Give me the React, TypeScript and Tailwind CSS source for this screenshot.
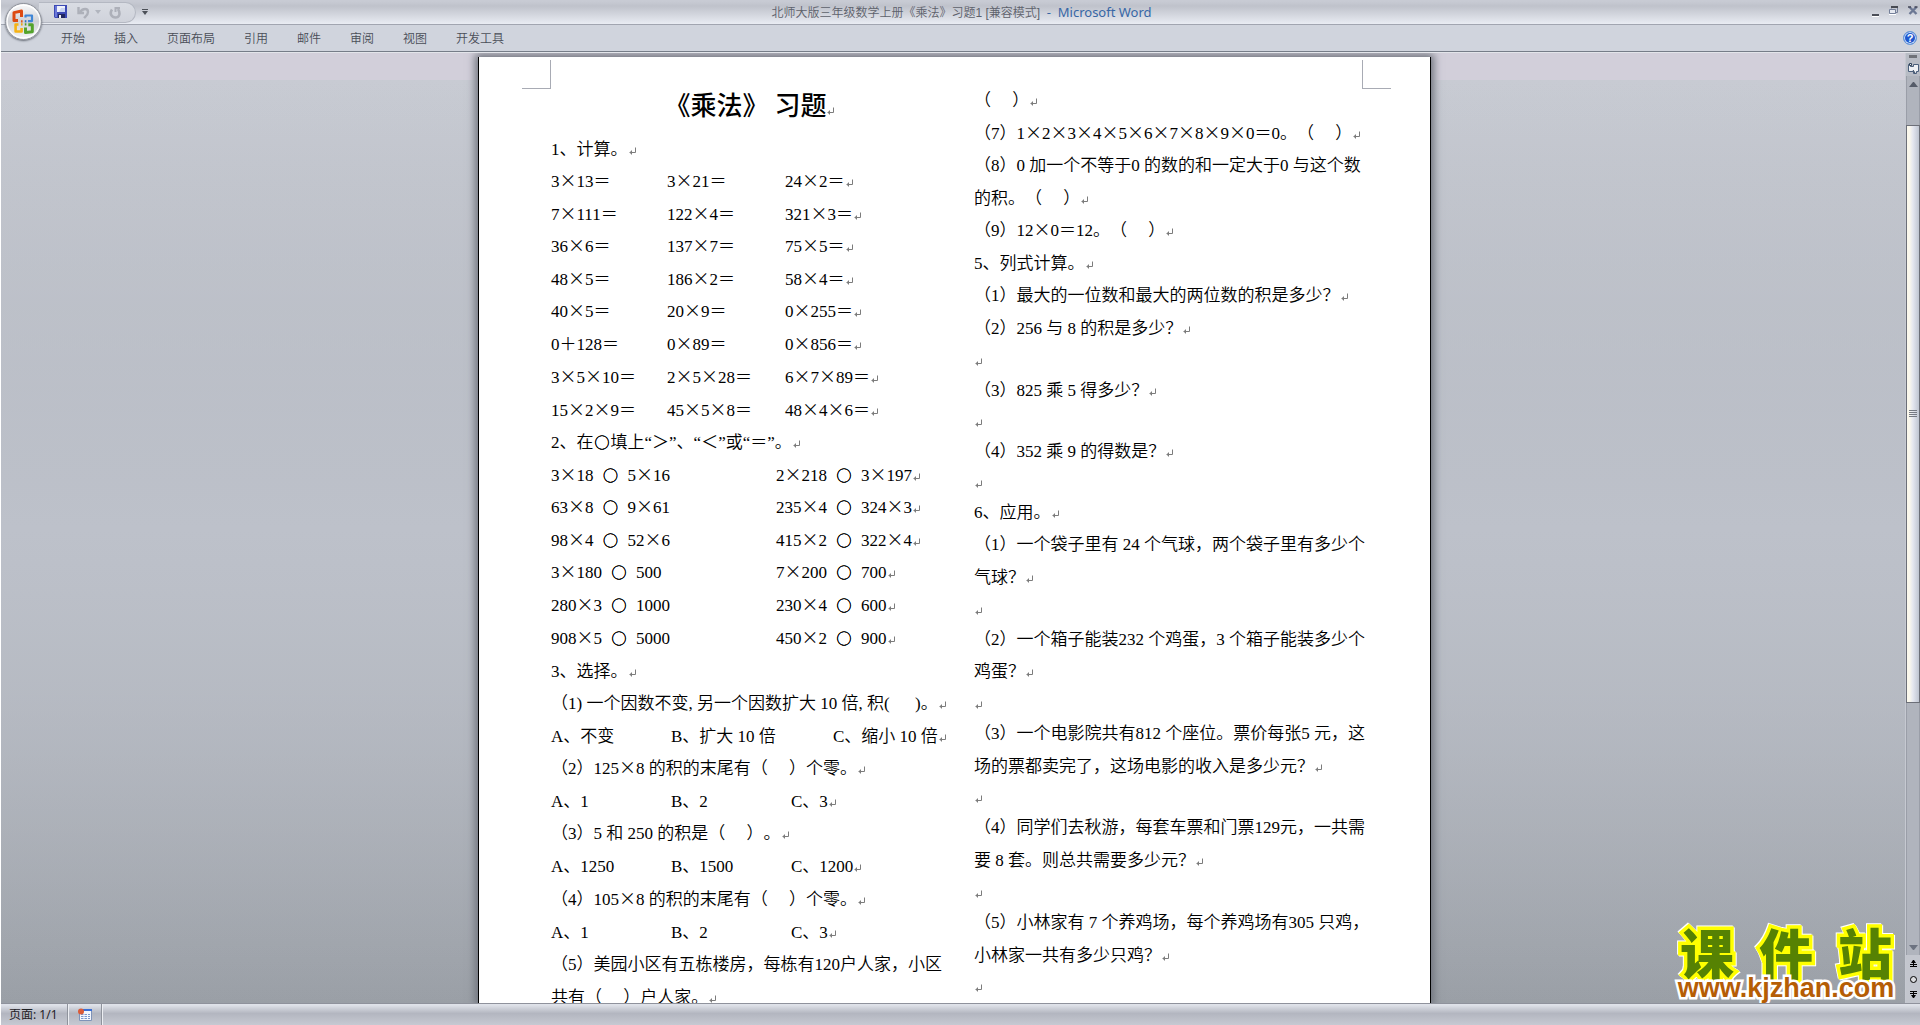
import { Fragment } from "react";
import type { ReactNode } from "react";

const TABS = ["开始", "插入", "页面布局", "引用", "邮件", "审阅", "视图", "开发工具"];

type Cells = { cols: "calc" | "compare" | "choice" | "choiceWide"; cells: string[] };
type Line = string | Cells;

const LEFT: Line[] = [
  "1、计算。",
  { cols: "calc", cells: ["3×13＝", "3×21＝", "24×2＝"] },
  { cols: "calc", cells: ["7×111＝", "122×4＝", "321×3＝"] },
  { cols: "calc", cells: ["36×6＝", "137×7＝", "75×5＝"] },
  { cols: "calc", cells: ["48×5＝", "186×2＝", "58×4＝"] },
  { cols: "calc", cells: ["40×5＝", "20×9＝", "0×255＝"] },
  { cols: "calc", cells: ["0＋128＝", "0×89＝", "0×856＝"] },
  { cols: "calc", cells: ["3×5×10＝", "2×5×28＝", "6×7×89＝"] },
  { cols: "calc", cells: ["15×2×9＝", "45×5×8＝", "48×4×6＝"] },
  "2、在○填上“＞”、“＜”或“＝”。",
  { cols: "compare", cells: ["3×18  ○  5×16", "2×218  ○  3×197"] },
  { cols: "compare", cells: ["63×8  ○  9×61", "235×4  ○  324×3"] },
  { cols: "compare", cells: ["98×4  ○  52×6", "415×2  ○  322×4"] },
  { cols: "compare", cells: ["3×180  ○  500", "7×200  ○  700"] },
  { cols: "compare", cells: ["280×3  ○  1000", "230×4  ○  600"] },
  { cols: "compare", cells: ["908×5  ○  5000", "450×2  ○  900"] },
  "3、选择。",
  "（1) 一个因数不变, 另一个因数扩大 10 倍, 积(      )。",
  { cols: "choiceWide", cells: ["A、不变", "B、扩大 10 倍", "C、缩小 10 倍"] },
  "（2）125×8 的积的末尾有（     ）个零。",
  { cols: "choice", cells: ["A、1", "B、2", "C、3"] },
  "（3）5 和 250 的积是（     ）。",
  { cols: "choice", cells: ["A、1250", "B、1500", "C、1200"] },
  "（4）105×8 的积的末尾有（     ）个零。",
  { cols: "choice", cells: ["A、1", "B、2", "C、3"] },
  "（5）美园小区有五栋楼房，每栋有120户人家，小区",
  "共有（     ）户人家。",
];

const RIGHT: string[] = [
  "（     ）",
  "（7）1×2×3×4×5×6×7×8×9×0＝0。（     ）",
  "（8）0 加一个不等于0 的数的和一定大于0 与这个数",
  "的积。（     ）",
  "（9）12×0＝12。（     ）",
  "5、列式计算。",
  "（1）最大的一位数和最大的两位数的积是多少？",
  "（2）256 与 8 的积是多少？",
  "",
  "（3）825 乘 5 得多少？",
  "",
  "（4）352 乘 9 的得数是？",
  "",
  "6、应用。",
  "（1）一个袋子里有 24 个气球，两个袋子里有多少个",
  "气球？",
  "",
  "（2）一个箱子能装232 个鸡蛋，3 个箱子能装多少个",
  "鸡蛋？",
  "",
  "（3）一个电影院共有812 个座位。票价每张5 元，这",
  "场的票都卖完了，这场电影的收入是多少元？",
  "",
  "（4）同学们去秋游，每套车票和门票129元，一共需",
  "要 8 套。则总共需要多少元？",
  "",
  "（5）小林家有 7 个养鸡场，每个养鸡场有305 只鸡，",
  "小林家一共有多少只鸡？",
  "",
];

/* Lines that wrap onto the next one carry no paragraph mark. */
const RUN_ON = /(小区|与这个数|多少个|，这|一共需|只鸡，)$/;

const GRIDS = {
  calc: "grid grid-cols-[116px_118px_1fr]",
  compare: "grid grid-cols-[225px_1fr]",
  choice: "grid grid-cols-[120px_120px_1fr]",
  choiceWide: "grid grid-cols-[120px_162px_1fr]",
};

function Mark() {
  return (
    <svg className="inline-block align-baseline" width="8" height="8" viewBox="0 0 8 8" aria-hidden="true">
      <path d="M7 0v5H1M3 3v4M2 4v2" fill="none" stroke="#7c7c7c" strokeWidth="1" transform="translate(.5 .5)" />
    </svg>
  );
}

/* Operators take the full-width shape of the Chinese face; circles sit in a full-width cell. */
function Mixed({ text }: { text: string }) {
  return (
    <>
      {text.split(/([×○])/).map((part, i) => {
        if (part === "×") {
          return (
            <span key={i} className="font-['Noto_Sans_CJK_SC',sans-serif] leading-none">
              ×
            </span>
          );
        }
        if (part === "○") {
          return (
            <span
              key={i}
              className="inline-block w-[17px] text-center font-['Noto_Sans_CJK_SC',sans-serif] text-[15px] leading-none [text-shadow:0_0_0_#000,0_0_0_#000]"
            >
              ○
            </span>
          );
        }
        return <Fragment key={i}>{part}</Fragment>;
      })}
    </>
  );
}

function DocLine({ line }: { line: Line }) {
  if (typeof line !== "string") {
    return (
      <div className={`h-8 leading-8 odd:h-[33px] nth-[8n]:h-[33px] ${GRIDS[line.cols]}`}>
        {line.cells.map((c, i) => (
          <span key={i}>
            <Mixed text={c} />
            {i === line.cells.length - 1 && <Mark />}
          </span>
        ))}
      </div>
    );
  }
  if (line === "") {
    return (
      <p className="h-[29px] leading-[30px]">
        <Mark />
      </p>
    );
  }
  return (
    <p className="h-8 leading-8 odd:h-[33px] nth-[8n]:h-[33px]">
      <Mixed text={line} />
      {!RUN_ON.test(line) && <Mark />}
    </p>
  );
}

function Crop({ side }: { side: "left" | "right" }) {
  return (
    <span
      className={
        side === "left"
          ? "absolute left-[43px] top-[3px] h-[29px] w-[29px] border-b border-r border-[#a8abb4]"
          : "absolute right-[39px] top-[3px] h-[29px] w-[29px] border-b border-l border-[#a8abb4]"
      }
    />
  );
}

function OfficeButton() {
  return (
    <button
      aria-label="Office 按钮"
      className="absolute left-[4px] top-[3px] z-10 size-[37px] rounded-full border border-[#8e929b] bg-linear-to-b from-[#fbfbfc] via-[#cfd1d6] to-[#f4f5f7] shadow-[0_1px_2px_rgba(60,65,75,.7)]"
    >
      <svg viewBox="0 0 35 35" width="35" height="35" fill="none" strokeWidth="2.6" strokeLinejoin="round">
        <circle cx="17.5" cy="17.5" r="16.4" stroke="#fff" strokeWidth="1.2" />
        <path d="M12 16.5H8V8.6L15.5 7v6" stroke="#dd4a12" strokeWidth="3" />
        <path d="M19.5 13.500V11.5h6.5v5.6h-4" stroke="#3f86d6" strokeWidth="2.2" />
        <path d="M12.5 20.500H9.6v7h6V24" stroke="#f6b315" />
        <path d="M19.5 23.500v5l6.800-.8v-7h-4" stroke="#53a32b" strokeWidth="3" />
        <path d="M15 17.3h1.6" stroke="#e2581a" strokeWidth="2.2" />
        <path d="M18.8 17.3h1.6" stroke="#2f6fc4" strokeWidth="2.2" />
        <path d="M15 20.4h1.6" stroke="#e9a80f" strokeWidth="2.2" />
        <path d="M18.8 20.4h1.6" stroke="#4b9a2a" strokeWidth="2.2" />
      </svg>
    </button>
  );
}

function QuickAccess() {
  return (
    <div className="ml-[38px] flex h-[21px] items-center rounded-r-full border border-l-0 border-[#b4b8c2] bg-linear-to-b from-[#d9dce3] to-[#d0d3db] pl-[15px] pr-[13px]">
      <button aria-label="保存">
        <svg width="14" height="14" viewBox="0 0 14 14">
          <path d="M0 0h13v13H1l-1-1z" fill="#3c49b4" />
          <path d="M1 1h2v11H1z" fill="#6b78d8" />
          <path d="M3 1h8v6H3z" fill="#eef1fb" />
          <path d="M7 3h4v4H5z" fill="#c9d4f2" />
          <path d="M4 9h7v4H4z" fill="#20265f" />
          <path d="M5 10h2v3H5z" fill="#f2f2f2" />
        </svg>
      </button>
      <button aria-label="撤消" className="ml-[9px]">
        <svg width="13" height="13" viewBox="0 0 13 13" fill="none" stroke="#adb0b9" strokeWidth="2.4">
          <path d="M3 6c3-4 8-4 8 0 0 3-2 4-4 6" />
          <path d="M1.5 1v6H7" />
        </svg>
      </button>
      <button aria-label="撤消列表" className="ml-[5px]">
        <svg width="6" height="4" viewBox="0 0 6 4">
          <path d="M0 0h6L3 4z" fill="#b1b5be" />
        </svg>
      </button>
      <button aria-label="恢复" className="ml-[8px]">
        <svg width="13" height="13" viewBox="0 0 13 13" fill="none" stroke="#adb0b9" strokeWidth="2.6">
          <path d="M3 3.5C0 8 3 11.500 6.500 11.500S12 8 9 3" />
          <path d="M6.500 6V2H11" strokeWidth="2" />
        </svg>
      </button>
    </div>
  );
}

function TitleBar() {
  return (
    <header className="relative flex h-[25px] items-center border-b border-[#a1a5b0] bg-linear-to-b from-[#c8cbd4] from-5% via-[#bfc2cb] via-25% to-[#e9ecf3]">
      <QuickAccess />
      <button aria-label="自定义快速访问工具栏" className="ml-[6px]">
        <svg width="6" height="6" viewBox="0 0 6 6" fill="#4c5058">
          <path d="M0 0h6v1H0zM0 2h6L3 6z" />
        </svg>
      </button>
      <h1 className="flex flex-1 items-baseline justify-center whitespace-pre pr-24 text-xs text-[#5d616b]">
        <span className="font-['Liberation_Sans','Noto_Sans_CJK_SC',sans-serif] font-[350]">北师大版三年级数学上册《乘法》习题1 [兼容模式]</span>
        <span className="font-['Noto_Sans'] text-[13px] leading-4 text-[#3767a6]">{"  -  Microsoft Word"}</span>
      </h1>
      <div className="flex gap-[10px] pr-[2px]">
        <button aria-label="最小化">
          <svg width="8" height="12" viewBox="0 0 8 12">
            <path d="M1 8h7v2H1z" fill="#4b4e58" />
            <path d="M1 10h7v1H1z" fill="#fff" />
          </svg>
        </button>
        <button aria-label="还原">
          <svg width="9" height="12" viewBox="0 0 9 12" fill="none" stroke="#75809a">
            <path d="M2.500 2.500V1.500h6v5H7" />
            <path d="M2 1h7" stroke="#474a52" strokeWidth="2" />
            <path d="M.5 3.500h6v4h-6z" fill="#e6e9f0" />
            <path d="M0 8.500h7" stroke="#fff" />
          </svg>
        </button>
        <button aria-label="关闭">
          <svg width="10" height="12" viewBox="0 0 10 12" fill="none" stroke="#6c7894" strokeWidth="2.400">
            <path d="M1.500 1l7 7M8.500 1l-7 7" />
            <path d="M0 1h3M6.500 1h3" stroke="#45485a" strokeWidth="1.500" />
          </svg>
        </button>
      </div>
      <OfficeButton />
    </header>
  );
}

function Scrollbar() {
  return (
    <aside className="flex w-[15px] shrink-0 flex-col border-l border-[#c6c9d1] bg-[#b0b4bd]">
      <div className="flex h-[23px] flex-col items-center bg-[#b8bcc5] pt-[2px]">
        <span className="h-[3px] w-[8px] bg-[#6f7279]" />
        <svg className="mt-[4px] shrink-0" width="13" height="13" viewBox="0 0 13 13" fill="#eef0f4" stroke="#4b5f7c">
          <path d="M1.500 2.500h2v2h3v-2h5v7h-2v2h-3v-2h-5z" />
          <path d="M2.500 1.500h2v2h-2zM6 8l2 3" stroke="#2e4159" />
        </svg>
      </div>
      <div className="flex flex-1 flex-col items-center border-x border-[#9a9ea8]">
        <svg className="mt-[6px] shrink-0" width="9" height="5" viewBox="0 0 9 5">
          <path d="M4 0h1l4 5H0z" fill="#565c69" />
        </svg>
        <div className="mt-[38px] flex w-[14px] flex-[582] flex-col items-center justify-center gap-px border border-[#6c6f78] bg-linear-to-r from-[#fbf8ec] from-20% via-[#e4e6ef] via-50% to-[#bfc5d1]">
          <span className="h-px w-2 bg-[#767a83]" />
          <span className="h-px w-2 bg-[#767a83]" />
          <span className="h-px w-2 bg-[#767a83]" />
          <span className="h-px w-2 bg-[#767a83]" />
        </div>
        <div className="flex flex-[250] items-end pb-[5px]">
          <svg width="9" height="5" viewBox="0 0 9 5">
            <path d="M0 0h9L5 5H4z" fill="#6d7381" />
          </svg>
        </div>
      </div>
      <div className="flex h-[48px] flex-col items-center justify-between bg-[#c3c6ce] py-[5px]">
        <svg width="7" height="7" viewBox="0 0 7 7">
          <path d="M3 0h1l2 3H4v1h3v1H4v1h3v1H0V6h3V5H0V4h3V3H1z" />
        </svg>
        <span className="size-[7px] rounded-full border border-black bg-[#dcdde0]" />
        <svg width="7" height="7" viewBox="0 0 7 7">
          <path d="M0 0h7v1H4v1h3v1H4v1h2L4 7H3L1 4h2V3H0V2h3V1H0z" />
        </svg>
      </div>
    </aside>
  );
}

function StatusBar() {
  return (
    <footer className="flex h-[22px] shrink-0 items-stretch border-t border-[#8f929c] bg-linear-to-b from-[#dfe2e9] from-5% via-[#b3b6c0] via-45% to-[#c6c9d2] text-xs text-[#1f2126]">
      <span className="flex w-[67px] items-center border-r border-[#8f939c] pl-2 font-['Noto_Sans','Noto_Sans_CJK_SC',sans-serif]">页面: 1/1</span>
      <button aria-label="宏录制" className="flex w-[34px] items-center justify-center border-x border-l-[#eceef2] border-r-[#8f939c]">
        <svg width="15" height="14" viewBox="0 0 15 14">
          <path d="M1.500 1.500h12v11h-12z" fill="#f4f7fd" stroke="#7f93b8" />
          <path d="M1 1h13v2H1z" fill="#3a6fd6" />
          <path d="M3 6.500h9M3 8.500h9M3 10.500h9" stroke="#7b98cc" strokeDasharray="2.500 1" />
          <circle cx="3" cy="3.500" r="3" fill="#db5b38" />
        </svg>
      </button>
      <span className="w-px bg-[#eceef2]" />
    </footer>
  );
}

function LogoChar({ children }: { children: ReactNode }) {
  return <span className="[-webkit-text-stroke:7px_#ff0] [paint-order:stroke_fill]">{children}</span>;
}

function Watermark() {
  return (
    <div className="absolute bottom-0 right-[7px] flex flex-col items-center">
      <div className="flex w-[224px] justify-between px-[6px] font-['Noto_Sans_CJK_SC',sans-serif] text-[54px] font-black leading-[45px] text-[#568203] [filter:drop-shadow(1px_1px_0_#fff)_drop-shadow(-1px_-1px_0_#fff)]">
        <LogoChar>课</LogoChar>
        <LogoChar>件</LogoChar>
        <LogoChar>站</LogoChar>
      </div>
      <a
        href="#"
        className="relative font-['Liberation_Sans',sans-serif] text-[27px] font-bold leading-[29px] text-[#b55d05] [-webkit-text-stroke:5px_#fff] [paint-order:stroke_fill]"
      >
        www.kjzhan.com
      </a>
    </div>
  );
}

export default function App() {
  return (
    <div className="flex h-screen flex-col overflow-hidden border-l border-white bg-[#d0d4dd]">
      <TitleBar />
      <nav className="flex h-[27px] shrink-0 items-center gap-[29px] border-b border-[#767d88] bg-[#d0d4dd] pl-[60px] font-['Noto_Sans_CJK_SC',sans-serif] text-xs text-[#4a4e58]">
        {TABS.map((t) => (
          <button key={t} className="whitespace-nowrap font-[350]">
            {t}
          </button>
        ))}
        <button
          aria-label="帮助"
          className="ml-auto mr-[3px] flex size-[14px] items-center justify-center rounded-full border border-[#6d9bd8] bg-[#1f57cf] font-['Liberation_Sans'] text-[11px] font-bold leading-none text-white ring-1 ring-inset ring-[#cfe2f8]"
        >
          ?
        </button>
      </nav>
      <div className="flex min-h-0 flex-1 border-t border-[#e3e5ea]">
        <main className="relative min-w-0 flex-1 overflow-hidden bg-linear-to-b from-[#d2cfda] from-[27px] via-[#c8cbd3] via-[27px] to-[#9a9fa6] pl-[3px] pt-1">
          <div className="absolute inset-0 bg-linear-to-b from-transparent from-[27px] via-[#bdc1ca] via-50% to-transparent" />
          <article className="relative mx-auto grid h-full w-[953px] grid-cols-[389px_389px] gap-x-[34px] border-x border-black bg-white pl-[72px] font-['Liberation_Serif','Noto_Sans_CJK_SC',serif] text-[17px] font-[350] text-black shadow-[0_0_8px_3px_#6f737c] [text-autospace:no-autospace] [text-spacing-trim:space-all]">
            <Crop side="left" />
            <Crop side="right" />
            <section className="whitespace-pre pt-6">
              <h2 className="h-[53px] pl-2 text-center font-['Noto_Sans_CJK_SC',sans-serif] text-[26px] font-medium leading-[46px]">
                {"《乘法》 习题"}
                <Mark />
              </h2>
              {LEFT.map((l, i) => (
                <DocLine key={i} line={l} />
              ))}
            </section>
            <section className="whitespace-pre pt-[28px]">
              {RIGHT.map((l, i) => (
                <DocLine key={i} line={l} />
              ))}
            </section>
          </article>
          <Watermark />
        </main>
        <Scrollbar />
      </div>
      <StatusBar />
    </div>
  );
}
